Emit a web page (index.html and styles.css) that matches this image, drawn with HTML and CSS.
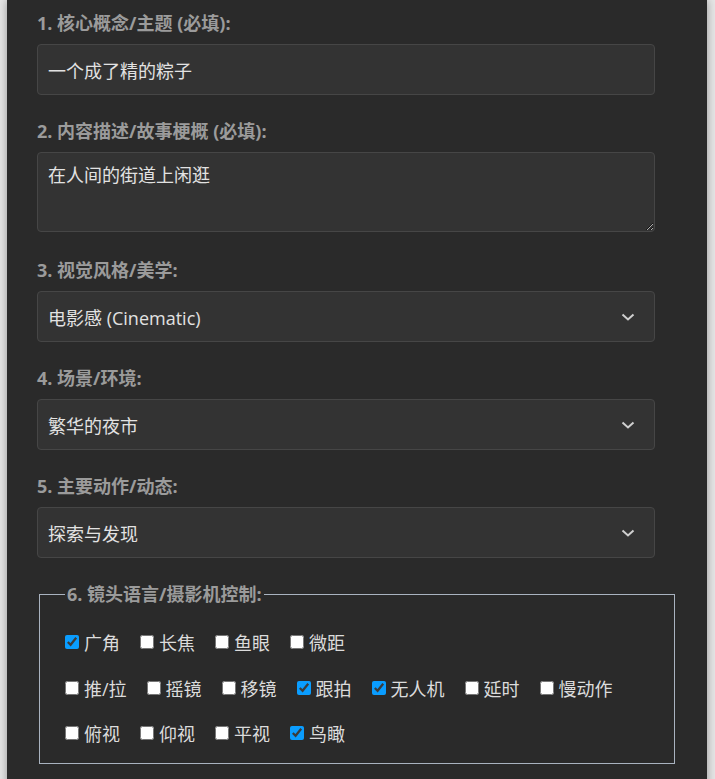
FILE: index.html
```html
<!DOCTYPE html>
<html lang="zh-CN">
<head>
<meta charset="utf-8">
<title>视频提示词生成</title>
<link rel="stylesheet" href="styles.css">
</head>
<body>
<div class="panel">
  <div class="group">
    <label class="field-label" for="concept">1. 核心概念/主题 (必填):</label>
    <input class="field" id="concept" type="text" value="一个成了精的粽子">
  </div>
  <div class="group group-textarea">
    <label class="field-label" for="desc">2. 内容描述/故事梗概 (必填):</label>
    <textarea class="field field-area" id="desc">在人间的街道上闲逛</textarea>
  </div>
  <div class="group">
    <label class="field-label">3. 视觉风格/美学:</label>
    <div class="field select">
      <span>电影感 (Cinematic)</span>
      <svg class="chev" width="14" height="8" viewBox="0 0 14 8"><polyline points="1.5,1.5 7,6.5 12.5,1.5" fill="none" stroke="#cfcfcf" stroke-width="2"/></svg>
    </div>
  </div>
  <div class="group">
    <label class="field-label">4. 场景/环境:</label>
    <div class="field select">
      <span>繁华的夜市</span>
      <svg class="chev" width="14" height="8" viewBox="0 0 14 8"><polyline points="1.5,1.5 7,6.5 12.5,1.5" fill="none" stroke="#cfcfcf" stroke-width="2"/></svg>
    </div>
  </div>
  <div class="group">
    <label class="field-label">5. 主要动作/动态:</label>
    <div class="field select">
      <span>探索与发现</span>
      <svg class="chev" width="14" height="8" viewBox="0 0 14 8"><polyline points="1.5,1.5 7,6.5 12.5,1.5" fill="none" stroke="#cfcfcf" stroke-width="2"/></svg>
    </div>
  </div>
  <fieldset class="camera">
    <legend class="legend">6. 镜头语言/摄影机控制:</legend>
    <div class="checks">
      <div class="check-row">
        <label class="check"><input type="checkbox" checked><span>广角</span></label>
        <label class="check"><input type="checkbox"><span>长焦</span></label>
        <label class="check"><input type="checkbox"><span>鱼眼</span></label>
        <label class="check"><input type="checkbox"><span>微距</span></label>
      </div>
      <div class="check-row">
        <label class="check"><input type="checkbox"><span>推/拉</span></label>
        <label class="check"><input type="checkbox"><span>摇镜</span></label>
        <label class="check"><input type="checkbox"><span>移镜</span></label>
        <label class="check"><input type="checkbox" checked><span>跟拍</span></label>
        <label class="check"><input type="checkbox" checked><span>无人机</span></label>
        <label class="check"><input type="checkbox"><span>延时</span></label>
        <label class="check"><input type="checkbox"><span>慢动作</span></label>
      </div>
      <div class="check-row">
        <label class="check"><input type="checkbox"><span>俯视</span></label>
        <label class="check"><input type="checkbox"><span>仰视</span></label>
        <label class="check"><input type="checkbox"><span>平视</span></label>
        <label class="check"><input type="checkbox" checked><span>鸟瞰</span></label>
      </div>
    </div>
  </fieldset>
</div>
</body>
</html>
```
FILE: styles.css
```css
html, body {
  margin: 0;
  padding: 0;
}
body {
  background: #e6e6e6;
  font-family: "Open Sans", "Noto Sans CJK SC", sans-serif;
  height: 779px;
  overflow: hidden;
}
.panel {
  width: 640px;
  margin: 0 8px 0 7px;
  padding: 11px 30px 14px 30px;
  background: #2a2a2a;
  box-shadow: 0 0 9px rgba(0, 0, 0, 0.35);
  min-height: 779px;
  box-sizing: content-box;
}
.group {
  margin-bottom: 24px;
}
.group-textarea {
  margin-bottom: 26px;
}
.field-label {
  display: block;
  font-size: 18px;
  font-weight: 700;
  line-height: 24px;
  color: #9b9b9b;
  margin-bottom: 9px;
}
.field {
  display: block;
  box-sizing: border-box;
  width: 618px;
  height: 51px;
  margin: 0;
  padding: 0 10px;
  background: #333333;
  border: 1px solid #464646;
  border-radius: 4px;
  color: #e2e2e2;
  font-family: "Open Sans", "Noto Sans CJK SC", sans-serif;
  font-size: 18px;
  outline: none;
}
.field-area {
  height: 80px;
  padding: 9px 10px;
  line-height: 26px;
  resize: vertical;
}
.select {
  display: flex;
  align-items: center;
  justify-content: space-between;
  padding: 0 19px 0 10px;
}
.chev {
  display: block;
}
.camera {
  margin: 0 2px;
  padding: 0 25px 18px 25px;
  border: 1px solid #a9b3c0;
}
.legend {
  padding: 0 2px;
  font-size: 18px;
  font-weight: 700;
  line-height: 24px;
  color: #9b9b9b;
}
.checks {
  display: flex;
  flex-direction: column;
  row-gap: 21.5px;
  padding-top: 24px;
}
.check-row {
  display: flex;
}
.check {
  display: flex;
  align-items: center;
  gap: 5px;
  margin-right: 20px;
  height: 24px;
  font-size: 18px;
  color: #dcdcdc;
}
.check input {
  width: 14px;
  height: 14px;
  margin: 0;
  accent-color: #0a9dff;
}
```
